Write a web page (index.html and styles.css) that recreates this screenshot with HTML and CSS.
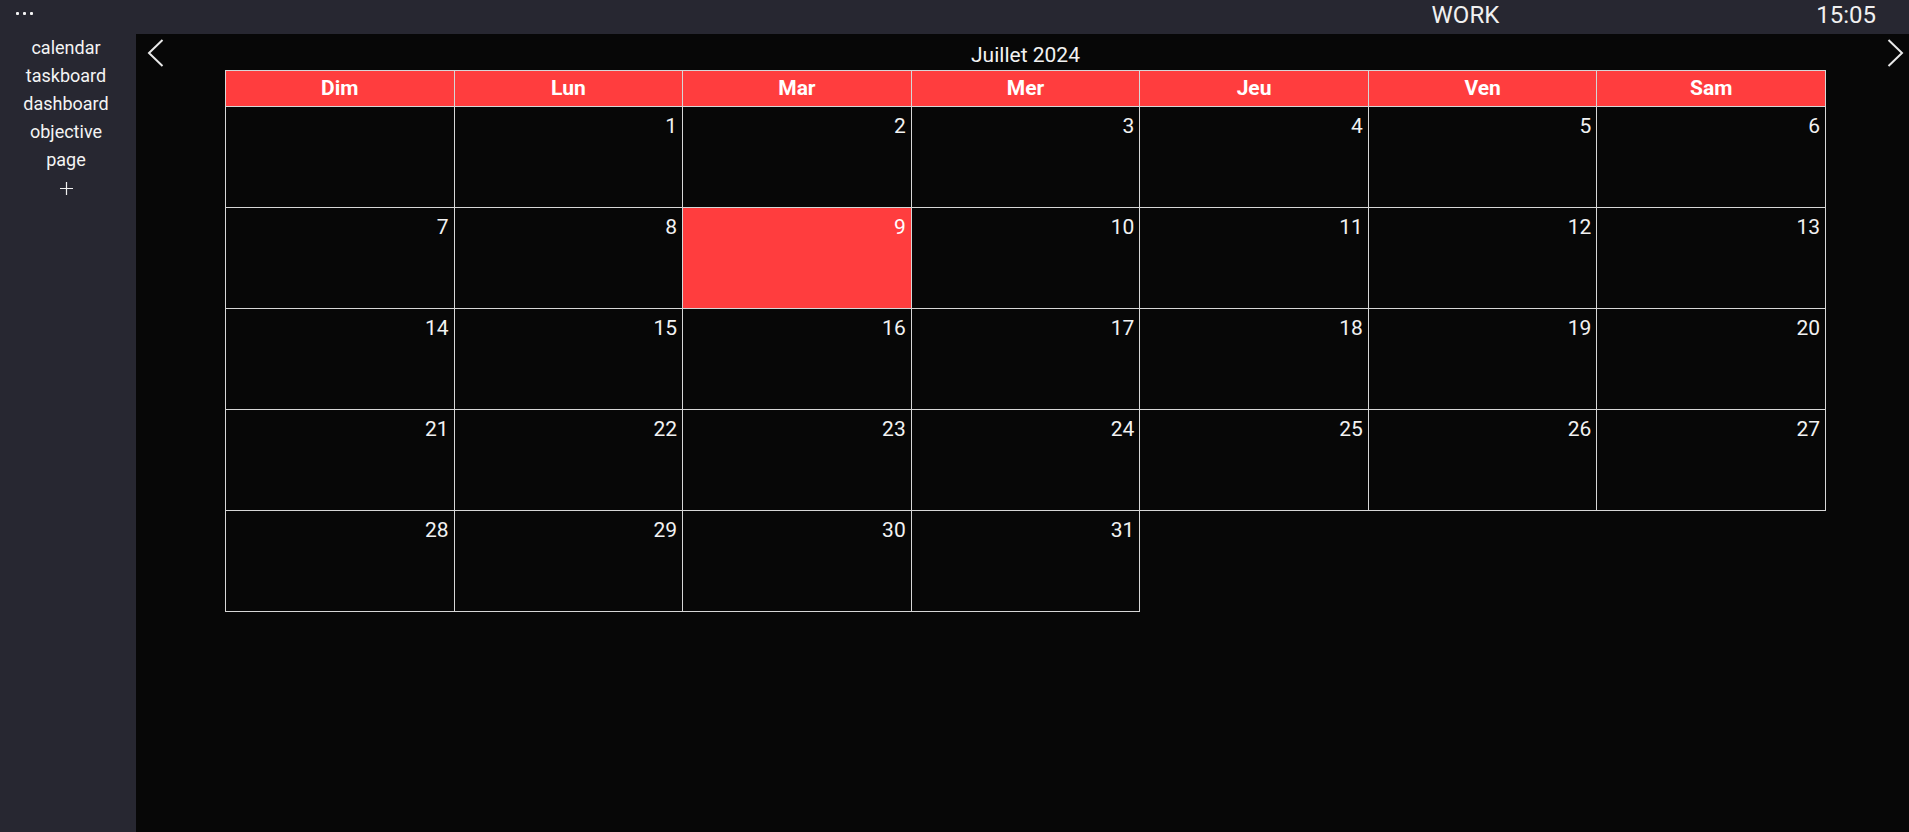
FILE: index.html
```html
<!DOCTYPE html>
<html lang="fr">
<head>
<meta charset="utf-8">
<title>Calendar</title>
<link rel="stylesheet" href="styles.css">
</head>
<body>
<header class="topbar">
  <div class="menu-dots"><span></span><span></span><span></span></div>
  <div class="spacer"></div>
  <div class="workspace">WORK</div>
  <div class="clock">15:05</div>
</header>
<div class="layout">
  <nav class="sidebar">
    <a class="nav-item">calendar</a>
    <a class="nav-item">taskboard</a>
    <a class="nav-item">dashboard</a>
    <a class="nav-item">objective</a>
    <a class="nav-item">page</a>
    <a class="nav-item add"><svg width="13" height="13" viewBox="0 0 13 13"><path d="M6.5 0v13M0 6.5h13" stroke="#f0f0f0" stroke-width="1.2" fill="none"/></svg></a>
  </nav>
  <main class="main">
    <button class="nav-btn"><svg width="17" height="28" viewBox="0 0 17 28"><polyline points="15.5,1 2,14 15.5,27" fill="none" stroke="#e8e8e8" stroke-width="2"/></svg></button>
    <section class="calendar">
      <div class="title">Juillet 2024</div>
      <div class="grid">
        <div class="head">Dim</div><div class="head">Lun</div><div class="head">Mar</div><div class="head">Mer</div><div class="head">Jeu</div><div class="head">Ven</div><div class="head">Sam</div>
        <div class="day"></div><div class="day">1</div><div class="day">2</div><div class="day">3</div><div class="day">4</div><div class="day">5</div><div class="day">6</div>
        <div class="day">7</div><div class="day">8</div><div class="day today">9</div><div class="day">10</div><div class="day">11</div><div class="day">12</div><div class="day">13</div>
        <div class="day">14</div><div class="day">15</div><div class="day">16</div><div class="day">17</div><div class="day">18</div><div class="day">19</div><div class="day">20</div>
        <div class="day">21</div><div class="day">22</div><div class="day">23</div><div class="day">24</div><div class="day">25</div><div class="day">26</div><div class="day">27</div>
        <div class="day">28</div><div class="day">29</div><div class="day">30</div><div class="day">31</div>
      </div>
    </section>
    <button class="nav-btn"><svg width="17" height="28" viewBox="0 0 17 28"><polyline points="1.5,1 15,14 1.5,27" fill="none" stroke="#e8e8e8" stroke-width="2"/></svg></button>
  </main>
</div>
</body>
</html>
```
FILE: styles.css
```css
* { box-sizing: border-box; }
html, body { margin: 0; padding: 0; height: 100%; }
body {
  background: #070707;
  font-family: Roboto, "Liberation Sans", sans-serif;
  color: #f2f2f2;
  display: flex;
  flex-direction: column;
  overflow: hidden;
}
.topbar {
  height: 34px;
  flex: 0 0 34px;
  background: #272731;
  display: flex;
  align-items: flex-start;
  padding: 0 33px 0 16px;
}
.menu-dots {
  display: flex;
  gap: 4px;
  margin-top: 12px;
}
.menu-dots span {
  width: 3px;
  height: 3px;
  background: #f4f4f4;
  border-radius: 1px;
}
.spacer { flex: 1; }
.workspace, .clock {
  font-size: 24px;
  line-height: 30px;
  color: #f0f0f0;
}
.workspace { margin-right: 317px; }
.layout {
  flex: 1;
  display: flex;
  min-height: 0;
}
.sidebar {
  width: 136px;
  flex: 0 0 136px;
  background: #272731;
  display: flex;
  flex-direction: column;
  align-items: center;
  padding-right: 4px;
}
.nav-item {
  font-size: 18px;
  line-height: 28px;
  color: #f4f4f4;
  cursor: pointer;
}
.nav-item.add {
  height: 28px;
  display: flex;
  align-items: center;
  padding-left: 1px;
}
.main {
  flex: 1;
  display: flex;
  align-items: flex-start;
  padding: 5px 5px 0 11px;
}
.nav-btn {
  width: 17px;
  height: 28px;
  padding: 0;
  margin: 0;
  border: 0;
  background: transparent;
  display: flex;
  cursor: pointer;
}
.calendar {
  flex: 1;
  margin: -5px 61px 0;
}
.title {
  font-size: 21px;
  line-height: 24px;
  padding-top: 9px;
  margin-bottom: 3px;
  text-align: center;
  color: #f2f2f2;
}
.grid {
  display: grid;
  grid-template-columns: repeat(7, 1fr);
  border-left: 1px solid #d6d6d6;
  border-top: 1px solid #d6d6d6;
}
.head {
  height: 36px;
  line-height: 35px;
  background: #ff3d3e;
  color: #ffffff;
  font-weight: 700;
  font-size: 21px;
  text-align: center;
  border-right: 1px solid #d6d6d6;
  border-bottom: 1px solid #d6d6d6;
}
.day {
  height: 101px;
  border-right: 1px solid #d6d6d6;
  border-bottom: 1px solid #d6d6d6;
  text-align: right;
  font-size: 21px;
  line-height: 24px;
  padding: 7px 5px 0 0;
  color: #f2f2f2;
}
.day.today {
  background: #ff3d3e;
  color: #ffffff;
}
```
